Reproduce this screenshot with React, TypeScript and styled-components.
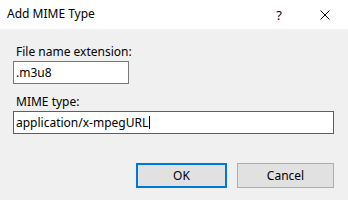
import { createGlobalStyle, styled } from 'styled-components'

const GlobalStyle = createGlobalStyle`
  html, body {
    margin: 0;
    padding: 0;
    background: #f0f0f0;
  }
  body {
    font-family: 'Noto Sans', 'Open Sans', sans-serif;
    font-size: 12px;
    color: #000;
  }
`

const App = () => {
  return (
    <>
      <GlobalStyle />
      <DialogWindow>
        <TitleBar>
          <TitleText>Add MIME Type</TitleText>
          <TitleButton aria-label='Help'>?</TitleButton>
          <TitleButton aria-label='Close'>
            <svg width='10' height='10' viewBox='0 0 10 10'>
              <path d='M0.5 0.5 L9.5 9.5 M9.5 0.5 L0.5 9.5' stroke='#000' strokeWidth='1' />
            </svg>
          </TitleButton>
        </TitleBar>
        <DialogBody>
          <FieldLabel>File name extension:</FieldLabel>
          <TextField $width='116px'>.m3u8</TextField>
          <FieldLabel $spaced>MIME type:</FieldLabel>
          <TextField $focused>
            application/x-mpegURL
            <Caret />
          </TextField>
          <ButtonRow>
            <DialogButton $default>OK</DialogButton>
            <DialogButton>Cancel</DialogButton>
          </ButtonRow>
        </DialogBody>
      </DialogWindow>
    </>
  )
}

const DialogWindow = styled('div')({
  width: '348px',
  height: '200px',
  display: 'flex',
  flexDirection: 'column',
  background: '#f0f0f0',
  overflow: 'hidden',
})

const TitleBar = styled('div')({
  height: '29px',
  background: '#ffffff',
  display: 'flex',
  alignItems: 'center',
  paddingLeft: '7px',
  flexShrink: 0,
})

const TitleText = styled('span')({
  flexGrow: 1,
  fontSize: '12px',
  lineHeight: '16px',
  marginTop: '-1px',
})

const TitleButton = styled('div')({
  width: '46px',
  height: '29px',
  display: 'flex',
  alignItems: 'center',
  justifyContent: 'center',
  fontSize: '13px',
  color: '#000',
})

const DialogBody = styled('div')({
  display: 'flex',
  flexDirection: 'column',
  alignItems: 'flex-start',
  padding: '15px 14px 0 13px',
})

const FieldLabel = styled('div')<{ $spaced?: boolean }>(({ $spaced }) => ({
  lineHeight: '16px',
  paddingLeft: '3px',
  marginTop: $spaced ? '10px' : 0,
  marginBottom: '1px',
}))

const TextField = styled('div')<{ $width?: string; $focused?: boolean }>(
  ({ $width, $focused }) => ({
    boxSizing: 'border-box',
    width: $width ?? '100%',
    height: '23px',
    display: 'flex',
    alignItems: 'center',
    padding: '0 2px',
    background: '#ffffff',
    border: `1px solid ${$focused ? '#0078d7' : '#7a7a7a'}`,
    lineHeight: '16px',
    whiteSpace: 'nowrap',
  })
)

const Caret = styled('span')({
  display: 'inline-block',
  width: '1px',
  height: '13px',
  background: '#000',
  marginLeft: '1px',
})

const ButtonRow = styled('div')({
  alignSelf: 'stretch',
  display: 'flex',
  justifyContent: 'flex-end',
  gap: '10px',
  marginTop: '29px',
})

const DialogButton = styled('div')<{ $default?: boolean }>(({ $default }) => ({
  boxSizing: 'border-box',
  width: $default ? '91px' : '97px',
  height: '25px',
  display: 'flex',
  alignItems: 'center',
  justifyContent: 'center',
  background: '#e1e1e1',
  border: $default ? '2px solid #0078d7' : '1px solid #adadad',
  lineHeight: '16px',
}))

export default App
